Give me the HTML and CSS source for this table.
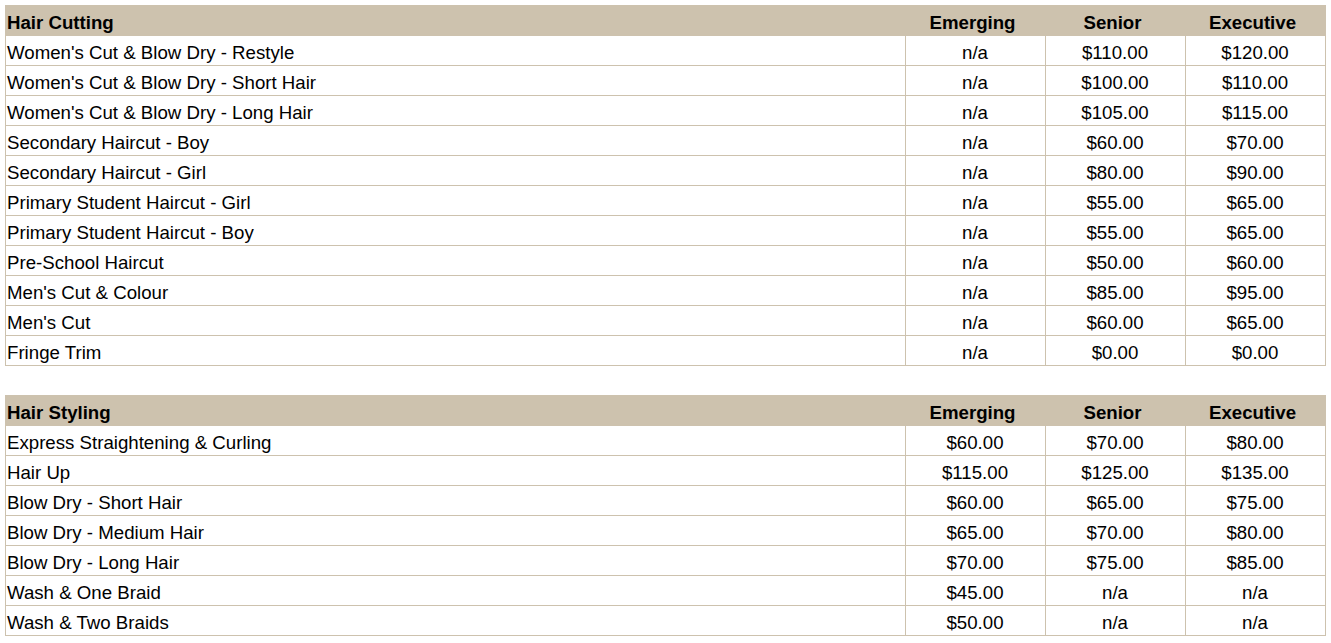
FILE: index.html
```html
<!DOCTYPE html>
<html>
<head>
<meta charset="utf-8">
<link rel="stylesheet" href="styles.css">
</head>
<body>
<table class="price-table">
  <colgroup><col class="c-name"><col class="c-price"><col class="c-price"><col class="c-price"></colgroup>
  <tr class="head"><th class="name">Hair Cutting</th><th>Emerging</th><th>Senior</th><th>Executive</th></tr>
  <tr><td class="name">Women's Cut &amp; Blow Dry - Restyle</td><td>n/a</td><td>$110.00</td><td>$120.00</td></tr>
  <tr><td class="name">Women's Cut &amp; Blow Dry - Short Hair</td><td>n/a</td><td>$100.00</td><td>$110.00</td></tr>
  <tr><td class="name">Women's Cut &amp; Blow Dry - Long Hair</td><td>n/a</td><td>$105.00</td><td>$115.00</td></tr>
  <tr><td class="name">Secondary Haircut - Boy</td><td>n/a</td><td>$60.00</td><td>$70.00</td></tr>
  <tr><td class="name">Secondary Haircut - Girl</td><td>n/a</td><td>$80.00</td><td>$90.00</td></tr>
  <tr><td class="name">Primary Student Haircut - Girl</td><td>n/a</td><td>$55.00</td><td>$65.00</td></tr>
  <tr><td class="name">Primary Student Haircut - Boy</td><td>n/a</td><td>$55.00</td><td>$65.00</td></tr>
  <tr><td class="name">Pre-School Haircut</td><td>n/a</td><td>$50.00</td><td>$60.00</td></tr>
  <tr><td class="name">Men's Cut &amp; Colour</td><td>n/a</td><td>$85.00</td><td>$95.00</td></tr>
  <tr><td class="name">Men's Cut</td><td>n/a</td><td>$60.00</td><td>$65.00</td></tr>
  <tr><td class="name">Fringe Trim</td><td>n/a</td><td>$0.00</td><td>$0.00</td></tr>
</table>
<table class="price-table second">
  <colgroup><col class="c-name"><col class="c-price"><col class="c-price"><col class="c-price"></colgroup>
  <tr class="head"><th class="name">Hair Styling</th><th>Emerging</th><th>Senior</th><th>Executive</th></tr>
  <tr><td class="name">Express Straightening &amp; Curling</td><td>$60.00</td><td>$70.00</td><td>$80.00</td></tr>
  <tr><td class="name">Hair Up</td><td>$115.00</td><td>$125.00</td><td>$135.00</td></tr>
  <tr><td class="name">Blow Dry - Short Hair</td><td>$60.00</td><td>$65.00</td><td>$75.00</td></tr>
  <tr><td class="name">Blow Dry - Medium Hair</td><td>$65.00</td><td>$70.00</td><td>$80.00</td></tr>
  <tr><td class="name">Blow Dry - Long Hair</td><td>$70.00</td><td>$75.00</td><td>$85.00</td></tr>
  <tr><td class="name">Wash &amp; One Braid</td><td>$45.00</td><td>n/a</td><td>n/a</td></tr>
  <tr><td class="name">Wash &amp; Two Braids</td><td>$50.00</td><td>n/a</td><td>n/a</td></tr>
</table>
</body>
</html>
```
FILE: styles.css
```css
html, body {
  margin: 0;
  padding: 0;
  background: #ffffff;
}
body {
  padding: 5px 0 0 5px;
  font-family: "Liberation Sans", Arial, sans-serif;
  font-size: 18.67px;
  color: #000;
}
.price-table {
  border-collapse: collapse;
  table-layout: fixed;
  width: 1321px;
}
.price-table.second {
  margin-top: 29px;
}
.c-name { width: 900px; }
.c-price { width: 140px; }
.price-table th,
.price-table td {
  padding: 7px 2px 2px 1px;
  border: 1px solid #cdc2ae;
  text-align: center;
  vertical-align: top;
  white-space: nowrap;
  line-height: 20px;
}
.price-table .name {
  text-align: left;
}
.head th {
  background: #cdc2ae;
  font-weight: bold;
  padding-right: 7px;
}
```
